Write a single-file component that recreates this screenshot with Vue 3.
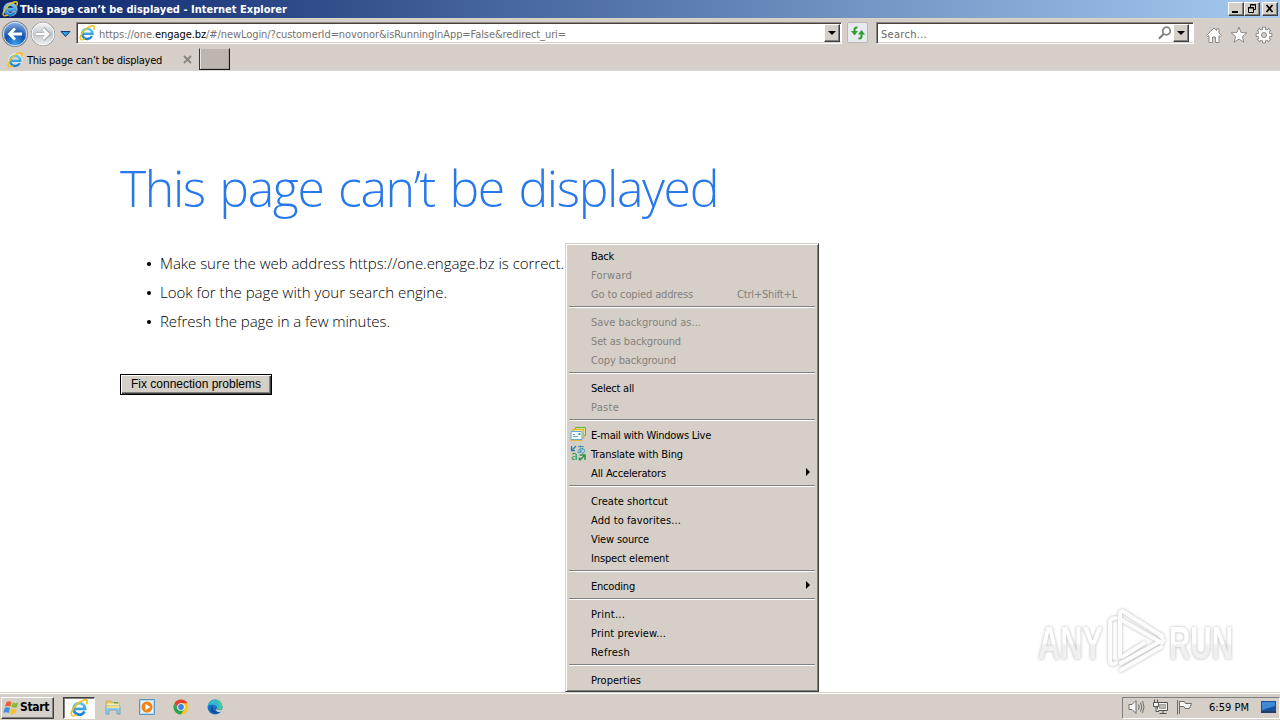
<template>
  <div class="desktop">
    <svg class="defs" width="0" height="0">
      <defs>
        <linearGradient id="ie-blue" x1="0" y1="0" x2="0" y2="1">
          <stop offset="0" stop-color="#5cc8f4" />
          <stop offset="1" stop-color="#1d7fd0" />
        </linearGradient>
        <radialGradient id="nav-blue" cx="0.5" cy="0.9" r="0.9">
          <stop offset="0" stop-color="#3aa0ee" />
          <stop offset="0.5" stop-color="#1450ac" />
          <stop offset="1" stop-color="#8fb4e6" />
        </radialGradient>
        <linearGradient id="nav-gray" x1="0" y1="0" x2="0" y2="1">
          <stop offset="0" stop-color="#f4f5f7" />
          <stop offset="0.5" stop-color="#c3c7cc" />
          <stop offset="1" stop-color="#eef0f2" />
        </linearGradient>
        <symbol id="ie" viewBox="0 0 16 16">
          <path d="M13.2 10.6A5.3 5.3 0 1 1 13.7 8.6H4.2" fill="none" stroke="#fff" stroke-width="3.6" opacity="0.65" />
          <path d="M12.9 11A5.1 5.1 0 1 1 13.4 8.7H4.2" fill="none" stroke="url(#ie-blue)" stroke-width="2.5" />
          <path d="M2 14.7C-.3 13.4 2.3 8.2 6 4.8 9.4 1.7 13.8-.3 15 1.300c.6.9.2 2.200-.4 3.400" fill="none" stroke="#f2c21c" stroke-width="1.5" />
          <path d="M2 14.700c1 .5 2.500 0 4-.9" fill="none" stroke="#f2c21c" stroke-width="1.3" />
        </symbol>
      </defs>
    </svg>

    <header class="titlebar">
      <svg class="icon16" viewBox="0 0 16 16"><use href="#ie" /></svg>
      <span v-fit="267" class="titlebar__text">This page can’t be displayed - Internet Explorer</span>
      <div class="titlebar__buttons">
        <button type="button" class="win-btn">
          <svg width="14" height="12"><path d="M3 9h6" stroke="#000" stroke-width="2" /></svg>
        </button>
        <button type="button" class="win-btn">
          <svg width="14" height="12" fill="none" stroke="#000"><path d="M5.5 4V1.5h5v5H9M5 2h6M3.5 4.5h5v5h-5zM3 5h6" /></svg>
        </button>
        <button type="button" class="win-btn win-btn--close">
          <svg width="14" height="12"><path d="M3.5 2l6 7M9.5 2l-6 7" stroke="#000" stroke-width="1.7" /></svg>
        </button>
      </div>
    </header>

    <div class="toolbar">
      <svg class="toolbar__nav" width="77" height="30" viewBox="0 0 77 30">
        <circle cx="43" cy="16" r="12" fill="#8f959d" />
        <circle cx="43" cy="16" r="11" fill="url(#nav-gray)" stroke="#fff" />
        <circle cx="15" cy="16" r="13" fill="#777d88" />
        <circle cx="15" cy="16" r="11.7" fill="url(#nav-blue)" stroke="#d9e7f8" />
        <path d="M22 16H9.5M15 10.5L9.5 16l5.5 5.5" fill="none" stroke="#fff" stroke-width="2.8" />
        <path d="M36 16h12.5M43 10.5l5.5 5.5-5.5 5.5" fill="none" stroke="#9fa4aa" stroke-width="4" />
        <path d="M36 16h12M43 11l5 5-5 5" fill="none" stroke="#fff" stroke-width="2.6" />
        <path d="M61 13.5h9l-4.500 5z" fill="#28a0e0" stroke="#173d72" />
      </svg>
      <div class="field field--address">
        <svg class="icon16" viewBox="0 0 16 16"><use href="#ie" /></svg>
        <span v-fit="467" class="field__url">https://one.<b>engage.bz</b>/#/newLogin/?customerId=novonor&amp;isRunningInApp=False&amp;redirect_uri=</span>
        <button type="button" class="drop-btn"><i class="caret" /></button>
      </div>
      <button type="button" class="refresh">
        <svg width="18" height="18" viewBox="0 0 18 18" fill="none" stroke="#2f9e2f" stroke-width="2">
          <path d="M8.500 3.5H7.500Q5.500 3.500 5.500 6v2" /><path d="M2 7h7L5.500 11.500z" fill="#2f9e2f" stroke="none" />
          <path d="M9.500 14.500h1q2 0 2-2.500v-2" /><path d="M9 10.500h7L12.500 6z" fill="#2f9e2f" stroke="none" />
        </svg>
      </button>
      <div class="field field--search">
        <span v-fit="46" class="field__hint">Search...</span>
        <svg class="field__lens" width="14" height="14" viewBox="0 0 14 14" fill="none" stroke="#85817e">
          <circle cx="8.5" cy="5" r="3.8" stroke-width="1.7" /><path d="M5.8 7.8L1 12.8" stroke-width="2.2" />
        </svg>
        <button type="button" class="drop-btn"><i class="caret" /></button>
      </div>
      <div class="toolbar__tools">
        <svg width="18" height="18" viewBox="0 0 18 18" fill="#fff" stroke="#8b8987">
          <path d="M1.5 9.5L9 2l2.500 2.500V3H14v4l2.500 2.500-1 1L14 9.500v7h-3.500V11h-3v5.500H4v-7l-1.500 1z" />
        </svg>
        <svg width="18" height="18" viewBox="0 0 18 18" fill="#fff" stroke="#8b8987">
          <path d="M9 1.200l2.100 5.300 5.700.4-4.400 3.600 1.500 5.700L9 13.100l-4.900 3.100 1.500-5.700L1.200 6.900l5.700-.4z" />
        </svg>
        <svg width="18" height="18" viewBox="0 0 18 18">
          <g stroke="#8b8987" stroke-width="4"><path v-for="a in gearAngles" :key="a" d="M9 .7v16.600" :transform="`rotate(${a} 9 9)`" /></g>
          <circle cx="9" cy="9" r="6.3" fill="#8b8987" />
          <g stroke="#fff" stroke-width="2.2"><path v-for="a in gearAngles" :key="a" d="M9 1.600v14.800" :transform="`rotate(${a} 9 9)`" /></g>
          <circle cx="9" cy="9" r="5.5" fill="#fff" />
          <circle cx="9" cy="9" r="2.5" fill="#d4d0c8" stroke="#8b8987" />
        </svg>
      </div>
    </div>

    <div class="tabs">
      <div class="tab">
        <svg class="icon16" viewBox="0 0 16 16"><use href="#ie" /></svg>
        <span v-fit="135" class="tab__title">This page can’t be displayed</span>
        <svg class="tab__close" width="9" height="9"><path d="M1 1l7 7M8 1L1 8" stroke="#8b8580" stroke-width="1.9" /></svg>
      </div>
      <button type="button" class="tabs__new" />
    </div>

    <main class="page">
      <h1 class="page__title"><span v-fit="598">This page can’t be displayed</span></h1>
      <ul class="page__list">
        <li v-for="tip in tips" :key="tip.text"><span v-fit="tip.width">{{ tip.text }}</span></li>
      </ul>
      <button type="button" class="page__fix"><span v-fit="130">Fix connection problems</span></button>

      <svg class="watermark" width="220" height="80" viewBox="0 0 220 80">
        <defs>
          <linearGradient id="wm" x1="0" y1="0" x2="0" y2="1">
            <stop offset="0.5" stop-color="#fff" />
            <stop offset="0.56" stop-color="#f0f0f0" />
          </linearGradient>
        </defs>
        <g class="watermark__letters">
          <text x="8" y="59" textLength="65" lengthAdjust="spacingAndGlyphs">ANY</text>
          <text x="139" y="59" textLength="64" lengthAdjust="spacingAndGlyphs">RUN</text>
        </g>
        <g class="watermark__mark" fill="none" stroke-linejoin="round" stroke-linecap="round" stroke-width="4">
          <path d="M86 18q-6 0-6 5v37q0 6 6 3" />
          <path d="M90 57V14q0-4 4-2l38 24M90 19l42 24q3-4-2-7M92 57l22-14M91 70l40-23M91 63l38-21" />
        </g>
      </svg>
    </main>

    <nav class="menu">
      <template v-for="(group, g) in menu" :key="g">
        <hr v-if="g" class="menu__line" />
        <div v-for="item in group" :key="item.label" class="menu__item" :class="{ 'menu__item--off': item.off }">
          <span class="menu__icon">
            <svg v-if="item.icon === 'mail'" width="16" height="16" viewBox="0 0 16 16">
              <path d="M5.5 1.5h10v8h-10z" fill="#d9efb4" stroke="#5cb531" />
              <path d="M3.5 3.500h10v8h-10z" fill="#fff2a8" stroke="#e5b51c" stroke-width="1.400" />
              <path d="M1 5.500h11v8H1z" fill="#f2f9fd" stroke="#65aad5" />
              <path d="M3 10.500h5M3 8.500h2" stroke="#63a5cb" /><path d="M8.500 7h2v2h-2z" fill="#359ad0" />
              <path d="M.5 14.500h12" stroke="#e7b936" />
            </svg>
            <svg v-else-if="item.icon === 'translate'" class="menu__translate" width="16" height="16" viewBox="0 0 16 16">
              <text x="6.500" y="7.500" font-size="9" fill="#2688b0">あ</text>
              <text x="1" y="15" font-size="12" fill="#329c4c">a</text>
              <path d="M1.500 5.500V1M1 5.500h4M2 5l4-4" fill="none" stroke="#2783b4" stroke-width="1.300" />
              <path d="M9.500 10H15v5M14.500 10.500L10 15M9.500 12.500v3" fill="none" stroke="#2c9448" stroke-width="1.500" />
            </svg>
          </span>
          <span v-fit="item.width" class="menu__label">{{ item.label }}</span>
          <span v-if="item.keys" v-fit="60" class="menu__label menu__keys">{{ item.keys }}</span>
          <i v-if="item.sub" class="menu__arrow" />
        </div>
      </template>
    </nav>

    <footer class="taskbar">
      <button type="button" class="start">
        <svg width="17" height="17" viewBox="0 0 17 17">
          <path d="M3.5 3Q6 1.300 8.500 3L7.300 7.700Q5 6.300 2 7.700z" fill="#ee6335" />
          <path d="M9.500 3.500Q12 5 15.500 3.500L14 8q-3 1.500-5.600 0z" fill="#85bd3c" />
          <path d="M1.700 9Q4.500 7.400 7 9l-1.300 5Q3.300 12.600.4 14z" fill="#3f91d8" />
          <path d="M8 9.500q2.800 1.400 5.700 0l-1.300 4.700q-2.800 1.500-5.500 0z" fill="#f6c32c" />
        </svg>
        <span v-fit="29">Start</span>
      </button>
      <div class="task task--active"><svg width="18" height="18" viewBox="0 0 16 16"><use href="#ie" /></svg></div>
      <div class="launch">
        <svg width="16" height="16" viewBox="0 0 16 16">
          <path d="M1 2h5l1 1.500h7V8H1z" fill="#e6c75d" stroke="#b99a43" stroke-width=".5" />
          <path d="M2 4.500h12V9H2z" fill="#f8eeb2" /><path d="M9 3h4v1.500H9z" fill="#58aa63" />
          <path d="M1 7h14v8h-3v-4H4v4H1z" fill="#96cce6" stroke="#4e99bf" stroke-width=".7" />
          <path d="M1.500 7h13v2h-13z" fill="#f2df87" />
        </svg>
        <svg width="16" height="16" viewBox="0 0 16 16">
          <path d="M.5.5h15v15H.5z" fill="#b8d6eb" stroke="#5c97c6" /><path d="M2 2h12v12H2z" fill="#e9f3fa" />
          <circle cx="8" cy="8" r="5.5" fill="#f08319" /><path d="M6.300 4.800L11.500 8l-5.200 3.200z" fill="#fff" />
        </svg>
        <svg width="16" height="16" viewBox="0 0 16 16">
          <circle cx="8" cy="8" r="7.5" fill="#f9c920" />
          <path d="M1.500 4.250A7.500 7.500 0 0 1 14.500 4.250H8L4.700 9.800z" fill="#df4132" />
          <path d="M1.500 4.250A7.500 7.500 0 0 0 8 15.500l3.300-5.600H4.750z" fill="#2fa351" />
          <circle cx="8" cy="8" r="3.8" fill="#fff" /><circle cx="8" cy="8" r="2.9" fill="#3c7fe6" />
        </svg>
        <svg width="16" height="16" viewBox="0 0 16 16">
          <circle cx="8" cy="8" r="7.5" fill="#1572c5" />
          <path d="M.6 7A7.500 7.500 0 0 1 15.500 8c0 3-4.500 3.500-6 2 1.400-2-.2-4-3-4.200C3.500 5.600 1.300 6.200.6 7z" fill="#35b8cf" />
          <path d="M9 .6A7.500 7.500 0 0 1 15.500 8c0 2.600-3.300 3.200-5 2.500C13 8 12.500 3.500 9 .6z" fill="#4fc98c" />
          <path d="M6 7.500c-1.200 3.500 2 6 6.800 5C9 16.500 3 13.800 3.600 9.600 3.800 8.400 4.800 7.600 6 7.500z" fill="#114a97" />
          <path d="M9.500 10c1 1.300 3.200 1.700 5.500.4l.5 1.100-2.500 1.400c-2.800.5-4.600-1.400-3.500-2.900z" fill="#d4d0c8" />
        </svg>
      </div>
      <div class="tray">
        <svg width="17" height="16" viewBox="0 0 17 16" fill="#f7f7f5" stroke="#6f6d69">
          <path d="M1 5.500h3l4-4v13l-4-4H1z" /><path d="M10.500 5.500q1.500 2.500 0 5M12.500 3.500q2.700 4.500 0 9M14.500 2q3 6 0 12" fill="none" />
        </svg>
        <svg width="17" height="16" viewBox="0 0 17 16" fill="#f7f7f5" stroke="#55534f">
          <path d="M5.500 3.500h10v8h-10z" /><path d="M7.500 5.500h6v4h-6z" fill="#bdb9b2" stroke="#a7a39c" /><path d="M7.500 14.500h7M11 12v2" />
          <path d="M1.500 3.500h5v4h-5zM2.500 3V.5M5.500 3V.5M4 8v4.500h3" />
        </svg>
        <svg width="17" height="16" viewBox="0 0 17 16" fill="#f7f7f5" stroke="#6f6d69">
          <path d="M1.500 1v14.500M3.500 2v13" /><path d="M3.500 2.500h5l1 2h6l-2 5H9l-1-2H3.500z" />
        </svg>
        <span v-fit="40" class="tray__clock">6:59 PM</span>
        <svg class="tray__desktop" width="17" height="16" viewBox="0 0 17 16">
          <path d="M1 2h15v10H1z" fill="#174f9d" /><path d="M2 3h13v4L2 11z" fill="#3f8bd3" /><path d="M1 12h15v2H1z" fill="#233d67" />
        </svg>
      </div>
    </footer>
  </div>
</template>

<script setup>
// Spreads letters so a label takes the given width in px
function fit(el, { value }) {
  el.style.letterSpacing = '0px'
  const natural = el.getBoundingClientRect().width
  el.style.letterSpacing = `${(value - natural) / el.textContent.length}px`
}

const vFit = { mounted: fit, updated: fit }

const gearAngles = [0, 45, 90, 135]

const tips = [
  { text: 'Make sure the web address https://one.engage.bz is correct.', width: 404 },
  { text: 'Look for the page with your search engine.', width: 287 },
  { text: 'Refresh the page in a few minutes.', width: 230 },
]

const menu = [
  [
    { label: 'Back', width: 23 },
    { label: 'Forward', width: 41, off: true },
    { label: 'Go to copied address', width: 102, off: true, keys: 'Ctrl+Shift+L' },
  ],
  [
    { label: 'Save background as...', width: 110, off: true },
    { label: 'Set as background', width: 90, off: true },
    { label: 'Copy background', width: 85, off: true },
  ],
  [
    { label: 'Select all', width: 43 },
    { label: 'Paste', width: 28, off: true },
  ],
  [
    { label: 'E-mail with Windows Live', width: 120, icon: 'mail' },
    { label: 'Translate with Bing', width: 92, icon: 'translate' },
    { label: 'All Accelerators', width: 75, sub: true },
  ],
  [
    { label: 'Create shortcut', width: 77 },
    { label: 'Add to favorites...', width: 90 },
    { label: 'View source', width: 58 },
    { label: 'Inspect element', width: 78 },
  ],
  [{ label: 'Encoding', width: 44, sub: true }],
  [
    { label: 'Print...', width: 34 },
    { label: 'Print preview...', width: 75 },
    { label: 'Refresh', width: 39 },
  ],
  [{ label: 'Properties', width: 50 }],
]
</script>

<style>
body {
  margin: 0;
  overflow: hidden;
}
</style>

<style scoped>
.desktop {
  position: relative;
  width: 1280px;
  height: 720px;
  display: flex;
  flex-direction: column;
  overflow: hidden;
  background: #fff;
  color: #000;
  font: 11px/13px 'DejaVu Sans Condensed', 'DejaVu Sans', 'Noto Sans CJK JP', sans-serif;
  font-stretch: condensed;
  white-space: nowrap;
}

.desktop * {
  box-sizing: border-box;
}

.defs {
  position: absolute;
}

svg {
  display: block;
  flex: none;
}

button {
  flex: none;
  display: flex;
  align-items: center;
  justify-content: center;
  margin: 0;
  padding: 0;
  border: 0;
  font: inherit;
  color: inherit;
}

.icon16 {
  width: 16px;
  height: 16px;
}

.titlebar {
  height: 18px;
  display: flex;
  align-items: center;
  padding: 0 2px;
  background: linear-gradient(90deg, #0a246a, #a6caf0);
}

.titlebar__text {
  margin-left: 2px;
  color: #fff;
  font-weight: 700;
}

.titlebar__buttons {
  display: flex;
  margin-left: auto;
}

.win-btn,
.drop-btn {
  width: 16px;
  height: 14px;
  background: #d4d0c8;
  border: 1px solid;
  border-color: #fff #404040 #404040 #fff;
  box-shadow: inset -1px -1px #808080;
}

.win-btn--close {
  margin-left: 2px;
}

.toolbar {
  height: 30px;
  display: flex;
  align-items: flex-start;
  background: #d6cfc9;
  border-top: 1px solid #d6d5c8;
}

.toolbar__nav {
  margin-top: -1px;
}

.field {
  height: 22px;
  margin-top: 3px;
  display: flex;
  align-items: center;
  background: #fff;
  border: 1px solid;
  border-color: #8f8881 #fff #fff #8f8881;
  box-shadow: inset 1px 1px #48423e, inset 0 -1px #d6cfc9;
}

.field--address {
  width: 766px;
  margin-left: -1px;
  padding: 0 1px 0 2px;
}

.field__url {
  margin-left: 4px;
  padding-top: 2px;
  color: #76716e;
}

.field__url b {
  color: #000;
  font-weight: 400;
}

.field--search {
  width: 318px;
  margin-left: 8px;
  padding: 0 4px;
}

.field__hint {
  padding-top: 2px;
  color: #6c6866;
}

.field__lens {
  margin-left: auto;
  margin-right: 1px;
}

.drop-btn {
  height: 18px;
}

.field--address .drop-btn {
  margin-left: auto;
}

.caret {
  border: 4px solid transparent;
  border-top-color: #000;
  border-bottom: 0;
}

.refresh {
  width: 21px;
  height: 21px;
  margin: 3px 0 0 5px;
  background: #e7eaf0;
  border: 1px solid #b9b6b4;
  border-radius: 2px;
}

.toolbar__tools {
  display: flex;
  gap: 7px;
  margin: 7px 0 0 11px;
}

.tabs {
  height: 23px;
  display: flex;
  background: #d6cfc9;
  border-bottom: 1px solid #ddd7d1;
}

.tab {
  width: 199px;
  display: flex;
  align-items: center;
  padding: 1px 0 0 7px;
}

.tab__title {
  margin-left: 4px;
  padding-top: 2px;
}

.tab__close {
  margin-left: 21px;
}

.tabs__new {
  width: 31px;
  height: 22px;
  background: #bdb5b0;
  border: 1px solid;
  border-color: #d6cfc9 #181614 #181614 #38342f;
  box-shadow: inset 1px 0 #e8e4df, inset -1px -1px #aaa39d;
}

.page {
  position: relative;
  flex: 1;
  padding: 82px 0 0 120px;
}

.page__title {
  margin: 0;
  height: 70px;
  color: #2778ec;
  font: 300 50px/70px 'Open Sans', 'Noto Sans', sans-serif;
  word-spacing: 3px;
}

.page__title span {
  display: inline-block;
}

.page__list {
  margin: 26px 0 0;
  padding: 0 0 0 26px;
  list-style: none;
  font: 300 15px/29px 'Open Sans', 'Noto Sans', sans-serif;
}

.page__list li {
  display: flex;
  align-items: center;
}

.page__list li::before {
  content: '';
  width: 4px;
  height: 4px;
  margin: 1px 10px 0 1px;
  border-radius: 50%;
  background: #000;
}

.page__list li span {
  margin-left: -1px;
}

.page__fix {
  width: 152px;
  height: 21px;
  margin-top: 38px;
  padding-bottom: 2px;
  background: #d4d0c8;
  border: 1px solid #000;
  box-shadow: inset 1px 1px #fff, inset -1px -1px #404040, inset -2px -2px #808080;
  font: 12px/14px 'Liberation Sans', Arial, sans-serif;
}

.watermark {
  position: absolute;
  left: 1030px;
  top: 529px;
  overflow: visible;
  filter: drop-shadow(0 0 1.5px rgba(0, 0, 0, 0.3));
}

.watermark__letters {
  fill: url(#wm);
  font: 700 47px 'Liberation Sans Narrow', 'Liberation Sans', sans-serif;
}

.watermark__mark {
  stroke: #fcfcfc;
}

.menu {
  position: absolute;
  left: 565px;
  top: 243px;
  width: 254px;
  padding: 2px;
  background: #d5cfc8;
  border: 1px solid;
  border-color: #d4d0c8 #404040 #404040 #d4d0c8;
  box-shadow: inset 1px 1px #fff, inset -1px -1px #808080;
}

.menu__line {
  height: 2px;
  margin: 3px 1px 4px;
  border: 0;
  border-top: 1px solid #808080;
  border-bottom: 1px solid #fff;
}

.menu__item {
  height: 19px;
  display: flex;
  align-items: center;
}

.menu__item--off {
  color: #85817b;
}

.menu__icon {
  width: 20px;
  margin: -2px 1px 0 2px;
}

.menu__label {
  padding-top: 2px;
}

.menu__translate {
  overflow: visible;
  font-family: 'Noto Sans CJK JP', sans-serif;
  line-height: 8px;
}

.menu__keys {
  margin-left: auto;
  margin-right: 19px;
}

.menu__arrow {
  margin: -2px 6px 0 auto;
  border: 4px solid transparent;
  border-left-color: #000;
  border-right: 0;
}

.taskbar {
  height: 28px;
  display: flex;
  align-items: center;
  padding: 2px 0 0 1px;
  background: #d5cfc8;
  border-top: 1px solid #d4d0c8;
  box-shadow: inset 0 1px #fff;
}

.start {
  width: 53px;
  height: 22px;
  padding-right: 3px;
  background: #d4d0c8;
  border: 1px solid;
  border-color: #fff #404040 #404040 #fff;
  box-shadow: inset -1px -1px #808080;
  font-weight: 700;
  font-size: 12px;
}

.task {
  width: 32px;
  height: 22px;
  margin-left: 9px;
  display: flex;
  align-items: center;
  justify-content: center;
}

.task--active {
  background: #fdfdfc;
  border: 1px solid;
  border-color: #404040 #fff #fff #404040;
  box-shadow: inset 1px 1px #808080;
}

.launch {
  display: flex;
  gap: 18px;
  margin: -2px 0 0 10px;
}

.tray {
  width: 158px;
  height: 22px;
  margin-left: auto;
  display: flex;
  align-items: center;
  gap: 7px;
  padding: 0 0 1px 5px;
  border: 1px solid;
  border-color: #808080 #fff #fff #808080;
}

.tray__clock {
  margin-left: 9px;
}

.tray__desktop {
  margin-left: 4px;
}
</style>
